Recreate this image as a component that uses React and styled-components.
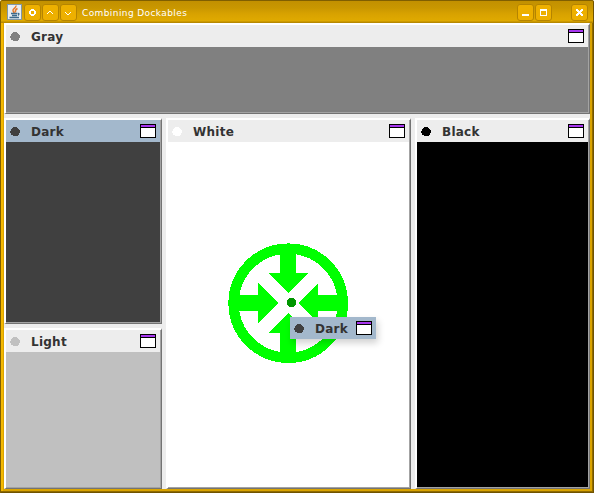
import React from "react";
import styled, { createGlobalStyle } from "styled-components";

const GlobalStyle = createGlobalStyle`
  html, body { margin: 0; padding: 0; overflow: hidden; background: #fff; }
  * { box-sizing: border-box; }
`;

const Window = styled.div`
  position: relative;
  width: 594px;
  height: 493px;
  display: flex;
  flex-direction: column;
  padding: 0 4px 4px;
  background: #d9a300;
  border-radius: 3px 3px 0 0;
  box-shadow: inset 1px 1px 0 #805f00, inset -1px -1px 0 #705300,
    inset -2px -2px 0 #906b00, inset 3px 2px 0 #f4b800;
  font-family: "DejaVu Sans", sans-serif;
`;

const TitleBar = styled.header`
  height: 23px;
  flex: none;
  display: flex;
  align-items: flex-start;
  margin: 0 -3px;
  padding: 4px 5px 0 6px;
  background: linear-gradient(#805f00 0 1px, #c29000 1px, #c99700 8px, #d8a200 14px, #e0aa00 21px, #b88900 22px);
  border-radius: 3px 3px 0 0;
`;

const Title = styled.h1`
  margin: 0 auto 0 5px;
  padding-top: 1px;
  font-size: 9px;
  font-weight: 400;
  line-height: 17px;
  letter-spacing: 0.4px;
  color: #fff;
  white-space: nowrap;
`;

const TitleButton = styled.button`
  display: block;
  width: 17px;
  height: 17px;
  margin: 0 0 0 ${(p) => p.$gap ?? 1}px;
  padding: 0;
  border: 1px solid #b58400;
  border-radius: 3px;
  background: #edb000;
  svg { display: block; }
`;

const Glyph = ({ children }) => (
  <svg width="15" height="15" viewBox="0 0 15 15" fill="none" stroke="#fff" shapeRendering="crispEdges">
    {children}
  </svg>
);

const JavaIcon = () => (
  <svg width="16" height="17" viewBox="0 0 16 17" fill="none">
    <rect x="0.5" y="0.5" width="14" height="15" fill="#e9eef2" stroke="#8097a8" />
    <path d="M9 1.500C9.500 4 5.500 4.500 6 6.500C6 7.500 7 8 7 9M10.500 4.500C8 5.500 8 6.500 8.500 8.500" stroke="#e8792b" strokeWidth="1.500" />
    <path d="M4 9.500H10.500M5 11.500H10M11 9.500Q13 9.500 11 11.500M2.500 13.500H12" stroke="#3f6a8c" strokeWidth="1.300" />
  </svg>
);

const Content = styled.main`
  flex: 1;
  display: grid;
  grid-template-columns: 158px 245px 175px;
  grid-template-rows: 91px 206px 161px;
  gap: 4px;
  background: #ededed;
`;

const Panel = styled.section`
  grid-area: ${(p) => p.$area};
  display: flex;
  flex-direction: column;
  border-style: solid;
  border-width: 2px 1px 1px 2px;
  border-color: #fff #737373 #737373 #fff;
`;

const PanelInner = styled.div`
  flex: 1;
  display: flex;
  flex-direction: column;
  border-right: 1px solid #a3a3a3;
  border-bottom: 1px solid #a3a3a3;
`;

const PanelHeader = styled.div`
  display: flex;
  align-items: center;
  flex: none;
  height: 22px;
  padding: 0 4px;
  background: ${(p) => (p.$active ? "#a3b8cc" : "#ededed")};
`;

const Label = styled.span`
  margin: 0 auto 0 11px;
  padding-top: 2px;
  font-size: 12px;
  font-weight: 700;
  line-height: 22px;
  letter-spacing: 0.25px;
  color: #333;
`;

const PanelBody = styled.div`
  flex: 1;
  background: ${(p) => p.$color};
`;

const Floating = styled(PanelHeader)`
  position: absolute;
  left: 290px;
  top: 317px;
  width: 86px;
  box-shadow: 2px 4px 7px rgba(0, 0, 0, 0.18);
`;

const DropMarker = styled.svg`
  position: absolute;
  left: 228px;
  top: 243px;
`;

const DotIcon = styled.svg`
  display: block;
  flex: none;
  margin-top: 2px;
`;

const Dot = ({ color }) => (
  <DotIcon width="10" height="10" viewBox="0 0 10 10" shapeRendering="crispEdges">
    <path d="M3 0H7V1H8V2H9V3H10V6H9V8H8V9H3V8H1V6H0V4H1V2H2V1H3Z" fill={color} />
  </DotIcon>
);

const WindowIcon = () => (
  <svg width="16" height="14" viewBox="0 0 16 14" shapeRendering="crispEdges">
    <path fill="#000" d="M0 0H16V14H0Z" />
    <path fill="#a736ef" d="M1 1H15V3H1Z" />
    <path fill="#fff" d="M1 4H15V13H1Z" />
  </svg>
);

const HeaderParts = ({ name, color }) => (
  <>
    <Dot color={color} />
    <Label>{name}</Label>
    <WindowIcon />
  </>
);

const Dockable = ({ name, color, area, active }) => (
  <Panel $area={area}>
    <PanelInner>
      <PanelHeader $active={active}>
        <HeaderParts name={name} color={color} />
      </PanelHeader>
      <PanelBody $color={color} />
    </PanelInner>
  </Panel>
);

const dockables = [
  { name: "Gray", color: "#808080", area: "1 / 1 / 2 / 4" },
  { name: "Dark", color: "#404040", area: "2 / 1 / 3 / 2", active: true },
  { name: "Light", color: "#c0c0c0", area: "3 / 1 / 4 / 2" },
  { name: "White", color: "#ffffff", area: "2 / 2 / 4 / 3" },
  { name: "Black", color: "#000000", area: "2 / 3 / 4 / 4" },
];

export default function App() {
  return (
    <>
      <GlobalStyle />
      <Window>
        <TitleBar>
          <JavaIcon />
          <TitleButton $gap={1}>
            <Glyph><path stroke="none" fill="#fff" fillRule="evenodd" d="M6 4H9V5H10V6H11V9H10V10H9V11H6V10H5V9H4V6H5V5H6ZM6 6V9H9V6Z" /></Glyph>
          </TitleButton>
          <TitleButton>
            <Glyph><path stroke="none" fill="#fff" d="M4 8h1v1h-1zM5 7h1v1h-1zM6 6h2v1h-2zM8 7h1v1h-1zM9 8h1v1h-1z" /></Glyph>
          </TitleButton>
          <TitleButton>
            <Glyph><path stroke="none" fill="#fff" d="M4 7h1v1h-1zM5 8h1v1h-1zM6 9h2v1h-2zM8 8h1v1h-1zM9 7h1v1h-1z" /></Glyph>
          </TitleButton>
          <Title>Combining Dockables</Title>
          <TitleButton>
            <Glyph><path strokeWidth="2" d="M4 10H11" /></Glyph>
          </TitleButton>
          <TitleButton>
            <Glyph><path stroke="none" fill="#fff" fillRule="evenodd" d="M4 4H11V11H4ZM5 6V10H10V6Z" /></Glyph>
          </TitleButton>
          <TitleButton $gap={19}>
            <Glyph><path stroke="none" fill="#fff" d="M4 4h2v1h1v1h1v-1h1v-1h2v2h-1v1h-1v1h1v1h1v2h-2v-1h-1v-1h-1v1h-1v1h-2v-2h1v-1h1v-1h-1v-1h-1z" /></Glyph>
          </TitleButton>
        </TitleBar>
        <Content>
          {dockables.map((d) => <Dockable key={d.name} {...d} />)}
        </Content>
        <DropMarker width="120" height="120" viewBox="0 0 120 120" shapeRendering="crispEdges">
          <circle cx="60.200" cy="60.200" r="54.600" fill="none" stroke="#0f0" strokeWidth="10.400" />
          <g fill="#0f0">
            <path d="M52 8H68V30H80L60 50L40 30H52Z" />
            <path d="M52 112H68V90H80L60 70L40 90H52Z" />
            <path d="M8 52V68H30V80L50 60L30 40V52Z" />
            <path d="M112 52V68H90V80L70 60L90 40V52Z" />
          </g>
          <circle cx="63.500" cy="59.500" r="4.700" fill="#009600" />
        </DropMarker>
        <Floating $active>
          <HeaderParts name="Dark" color="#404040" />
        </Floating>
      </Window>
    </>
  );
}
